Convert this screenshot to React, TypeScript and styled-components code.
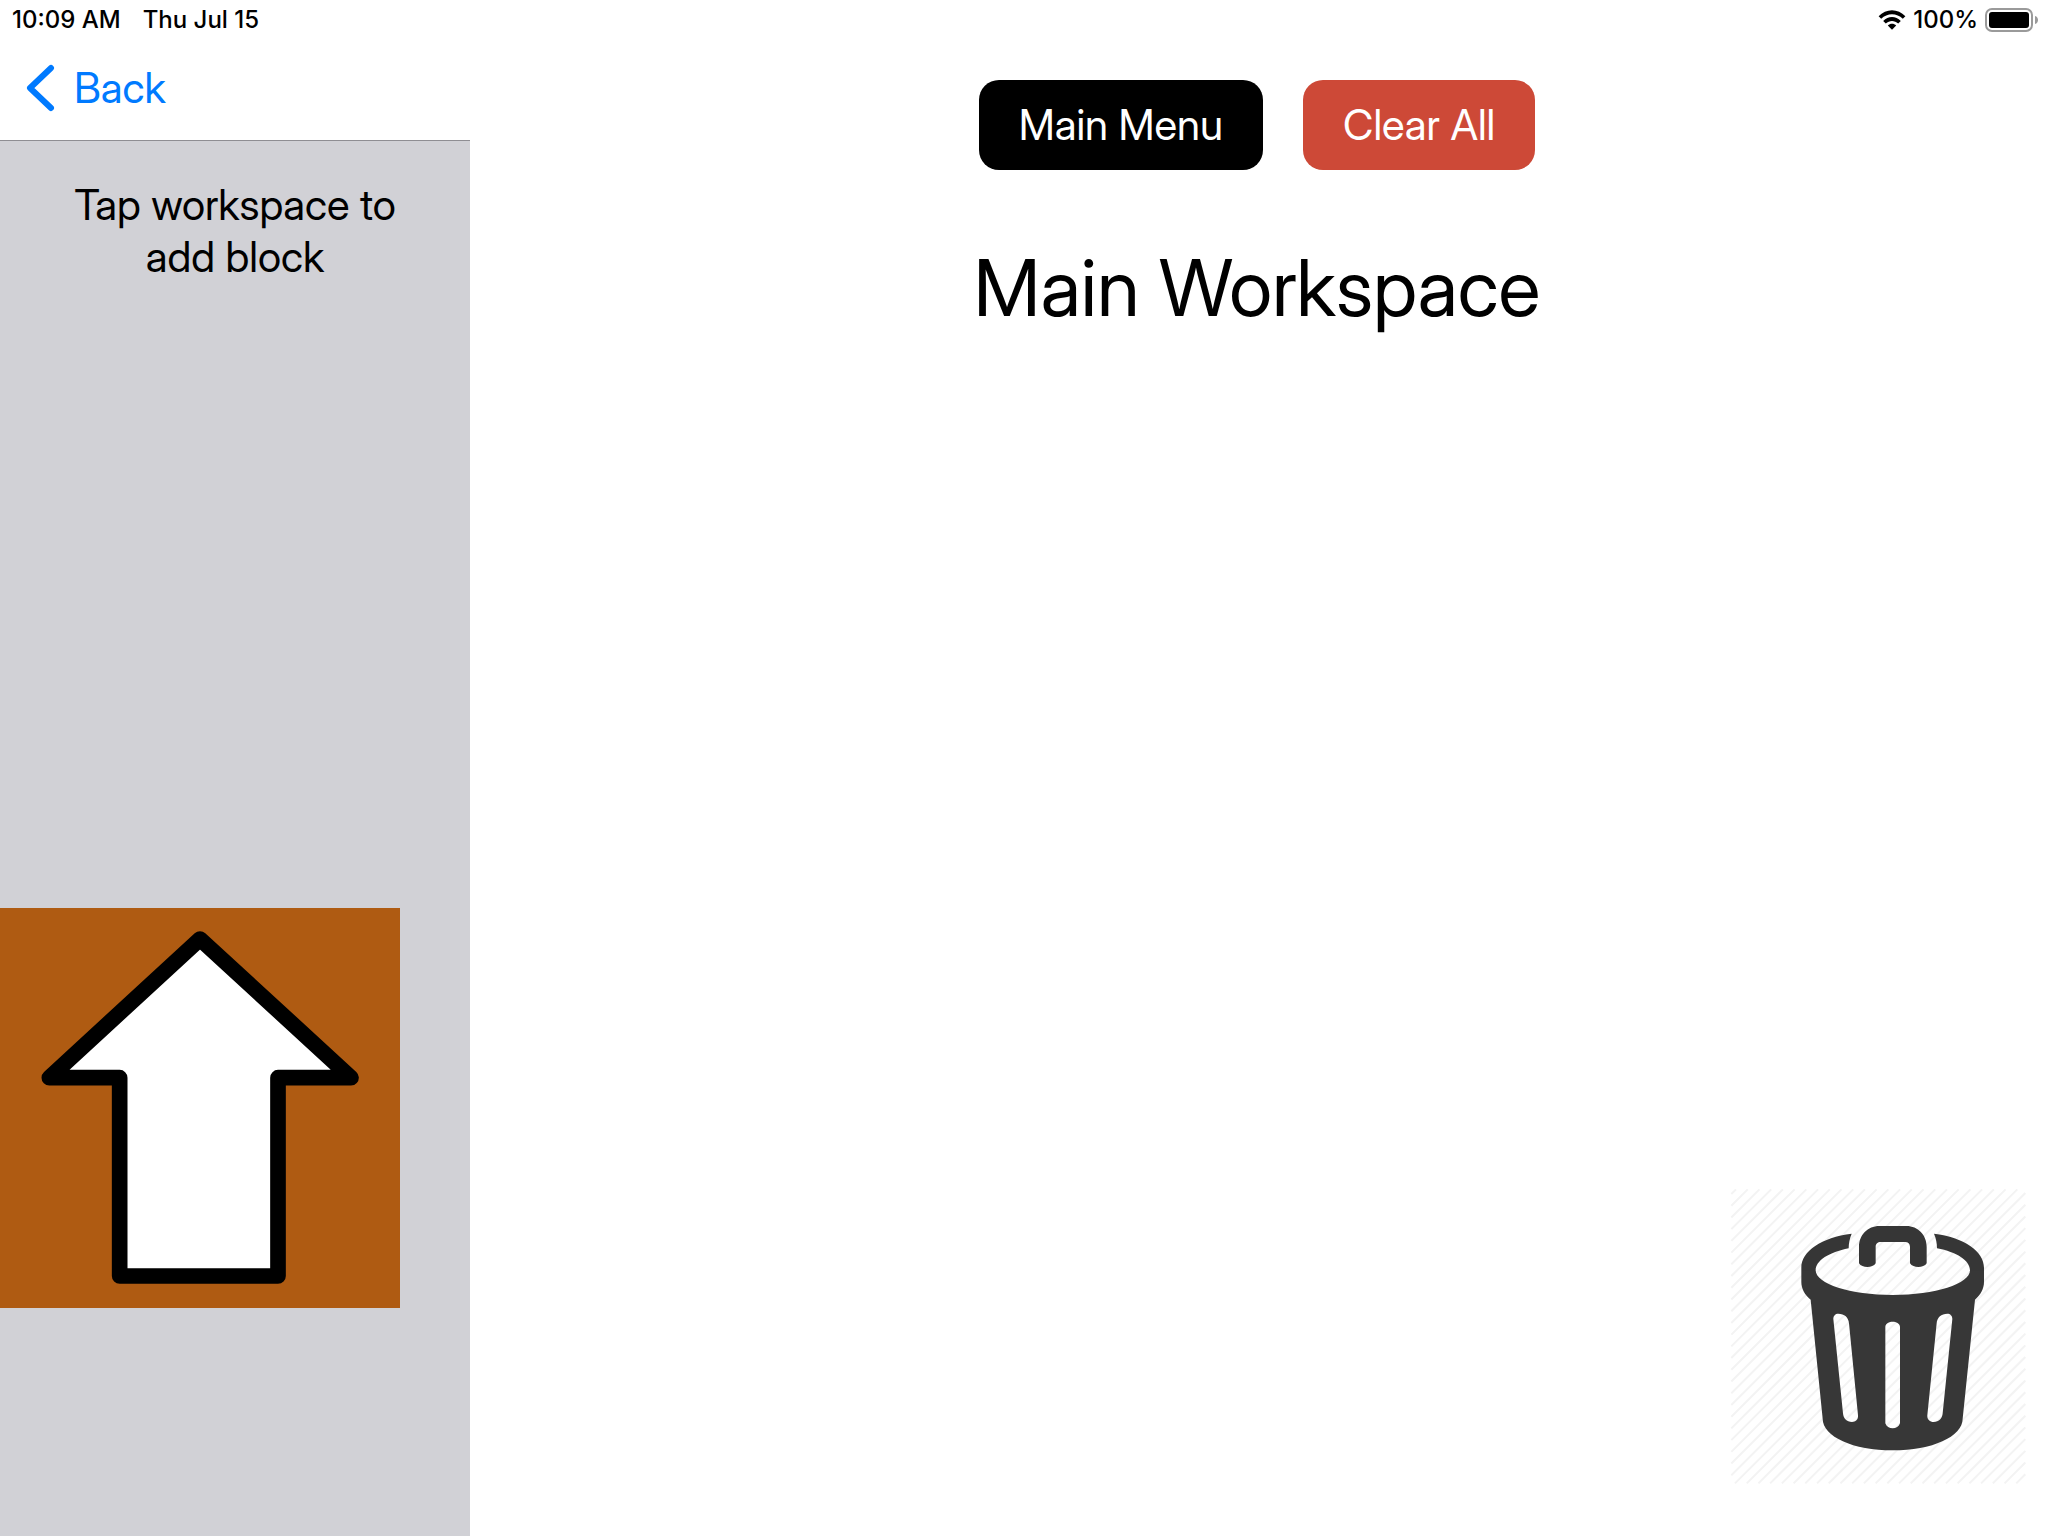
import React from "react";
import styled, { createGlobalStyle } from "styled-components";

const GlobalStyle = createGlobalStyle`
  *, *::before, *::after { box-sizing: border-box; }
  body {
    margin: 0;
    background: #ffffff;
    color: #000000;
    font-family: "Inter Display", Roboto, "Liberation Sans", sans-serif;
  }
  button { font-family: inherit; cursor: pointer; }
`;

const Screen = styled.div`
  display: flex;
  flex-direction: column;
  min-height: 100vh;
`;

const StatusBar = styled.header`
  display: flex;
  align-items: center;
  justify-content: space-between;
  height: 40px;
  padding: 0 9px 0 12px;
  font-family: Inter, "Liberation Sans", sans-serif;
  font-size: 24px;
  font-weight: 500;
  line-height: 40px;
`;

const StatusGroup = styled.div<{ $gap: number }>`
  display: flex;
  align-items: center;
  gap: ${(p) => p.$gap}px;
`;

const Columns = styled.div`
  display: grid;
  grid-template-columns: 470px 1fr;
  flex: 1;
`;

const Sidebar = styled.aside`
  display: flex;
  flex-direction: column;
`;

const NavBar = styled.nav`
  display: flex;
  align-items: center;
  height: 101px;
  padding: 0 24px 4px;
  border-bottom: 1px solid #8f8e93;
`;

const BackLink = styled.a`
  display: flex;
  align-items: center;
  gap: 16px;
  color: #007aff;
  font-size: 42px;
  line-height: 52px;
  text-decoration: none;
`;

const Palette = styled.div`
  display: flex;
  flex: 1;
  flex-direction: column;
  align-items: flex-start;
  justify-content: space-between;
  padding: 38px 0 228px;
  background: #d1d1d6;
`;

const Hint = styled.p`
  align-self: center;
  width: 340px;
  margin: 0;
  font-size: 42px;
  line-height: 52px;
  text-align: center;
`;

const BlockButton = styled.button`
  width: 400px;
  height: 400px;
  padding: 0;
  border: 0;
  background: #af5b12;

  svg { display: block; }
`;

const Workspace = styled.main`
  display: flex;
  flex-direction: column;
  align-items: center;
  padding: 40px 20px 50px 16px;
`;

const Actions = styled.div`
  display: flex;
  gap: 40px;
`;

const ActionButton = styled.button<{ $color: string }>`
  height: 90px;
  padding: 0 40px;
  border: 0;
  border-radius: 20px;
  background: ${(p) => p.$color};
  color: #ffffff;
  font-size: 42px;
  line-height: 52px;
`;

const Title = styled.h1`
  margin: 70px 0 0;
  font-size: 78px;
  font-weight: 400;
  line-height: 96px;
`;

const TrashButton = styled.button`
  align-self: flex-end;
  width: 300px;
  height: 300px;
  margin-top: auto;
  padding: 0;
  border: 0;
  background: #ffffff;

  svg { display: block; }
`;

const WifiIcon = () => (
  <svg width="28" height="20" viewBox="0 0 28 20" aria-label="Wi-Fi">
    <path d="M0.6 6.2 C8 -1.8 20 -1.8 27.4 6.2 L24.8 8.8 C18.8 2.6 9.2 2.6 3.2 8.8 Z" />
    <path d="M5.2 10.9 C10.2 5.8 17.8 5.8 22.8 10.9 L20.2 13.5 C16.6 10 11.4 10 7.8 13.5 Z" />
    <path d="M9.8 15.5 C12.2 13.2 15.8 13.2 18.2 15.5 L14 19.8 Z" />
  </svg>
);

const BatteryIcon = () => (
  <svg width="54" height="24" viewBox="0 0 54 24" aria-label="Battery full">
    <rect x="1" y="1" width="46" height="22" rx="6" fill="none" stroke="#9a9a9a" strokeWidth="2" />
    <rect x="4" y="4" width="40" height="16" rx="3" />
    <path d="M50 8 C54 9 54 15 50 16 Z" fill="#9a9a9a" />
  </svg>
);

const BackIcon = () => (
  <svg width="34" height="48" viewBox="0 0 34 48" aria-hidden="true">
    <path d="M27 4 L6 24 L27 44" fill="none" stroke="#007aff" strokeWidth="6" strokeLinecap="round" strokeLinejoin="round" />
  </svg>
);

const ArrowIcon = () => (
  <svg width="100%" height="100%" viewBox="0 54 1200 1200" aria-hidden="true">
    <path
      d="M600 147 L1053 563 H834 V1158 H359 V563 H148 Z"
      fill="#ffffff"
      stroke="#000000"
      strokeWidth="47"
      strokeLinejoin="round"
    />
  </svg>
);

const stripes = Array.from({ length: 50 }, (_, i) => 14 + i * 35.16);

const TrashIcon = () => (
  <svg width="100%" height="100%" viewBox="24 30 900 900" aria-hidden="true">
    <g stroke="#f3f3f3" strokeWidth="6">
      {stripes.map((s) => {
        const near = Math.max(0, s - 882);
        const far = Math.min(882, s);
        return <line key={s} x1={34 + far} y1={40 + near} x2={34 + near} y2={40 + far} />;
      })}
    </g>
    <g fill="#333333" fillRule="evenodd" opacity="0.98">
      <path
        d="M395 173 C305 184 244 226 244 275 V318 C244 338 254 356 272 371 L308 728 C308 782 400 823 518 823 C636 823 728 782 728 728 L765 371 C782 356 792 338 792 318 V275 C792 226 732 184 642 173 C648 187 651 202 651 217 C710 228 750 254 750 283 C750 324 646 357 518 357 C391 357 287 324 287 283 C287 254 327 229 386 217 C386 202 389 187 395 173 Z
        M340 429 C340 419 346 413 355 413 C373 413 386 424 387 442 L414 718 C415 730 408 738 396 738 C380 738 370 727 369 712 Z
        M697 429 C697 419 691 413 682 413 C664 413 651 424 650 442 L622 718 C621 730 629 738 641 738 C657 738 667 727 668 712 Z
        M496 452 C498 432 538 432 540 452 V742 C534 762 502 762 496 742 Z"
      />
      <path d="M417 262 V213 C417 177 443 150 478 150 H559 C594 150 620 177 620 213 V262 C611 277 579 277 570 262 V212 C570 204 564 198 556 198 H482 C473 198 467 204 467 212 V262 C458 277 426 277 417 262 Z" />
    </g>
  </svg>
);

export default function App() {
  return (
    <Screen>
      <GlobalStyle />
      <StatusBar>
        <StatusGroup $gap={22}>
          <span>10:09 AM</span>
          <span>Thu Jul 15</span>
        </StatusGroup>
        <StatusGroup $gap={7}>
          <WifiIcon />
          <span>100%</span>
          <BatteryIcon />
        </StatusGroup>
      </StatusBar>
      <Columns>
        <Sidebar>
          <NavBar>
            <BackLink href="#">
              <BackIcon />
              Back
            </BackLink>
          </NavBar>
          <Palette>
            <Hint>Tap workspace to add block</Hint>
            <BlockButton aria-label="Move forward block">
              <ArrowIcon />
            </BlockButton>
          </Palette>
        </Sidebar>
        <Workspace>
          <Actions>
            <ActionButton $color="#000000">Main Menu</ActionButton>
            <ActionButton $color="#cd4937">Clear All</ActionButton>
          </Actions>
          <Title>Main Workspace</Title>
          <TrashButton aria-label="Trash">
            <TrashIcon />
          </TrashButton>
        </Workspace>
      </Columns>
    </Screen>
  );
}
